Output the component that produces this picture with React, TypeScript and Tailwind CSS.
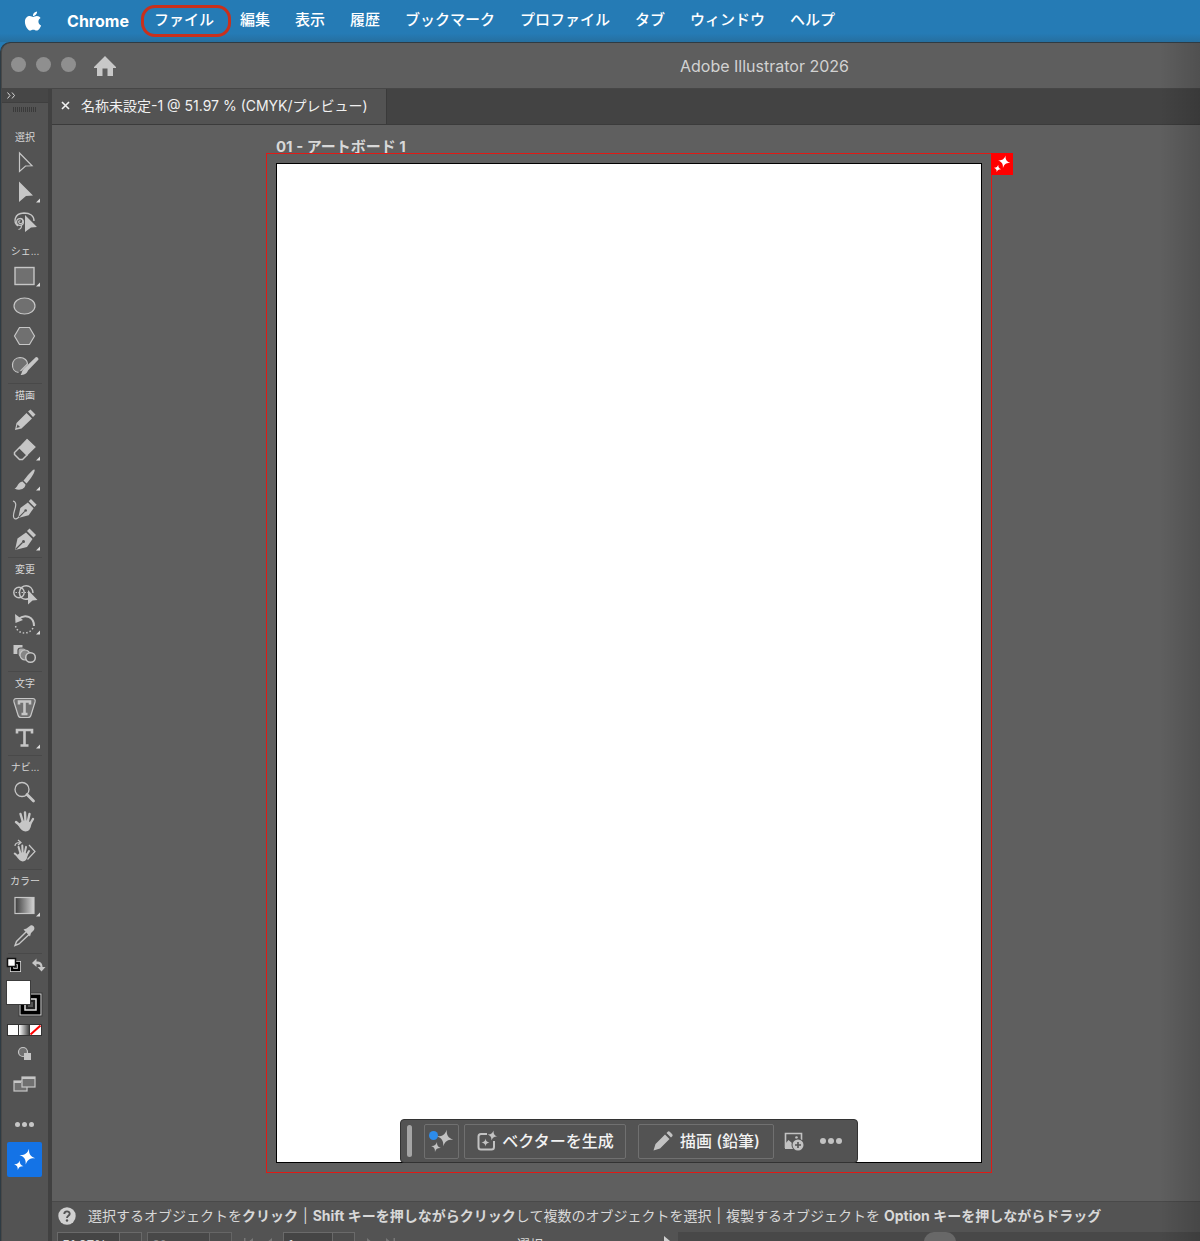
import type { ReactNode } from "react";
import { FaApple } from "react-icons/fa";

const menus = ["編集", "表示", "履歴", "ブックマーク", "プロファイル", "タブ", "ウィンドウ", "ヘルプ"];

const STAR = "M0 -10 C1 -3.5 3.5 -1 10 0 C3.5 1 1 3.5 0 10 C-1 3.5 -3.5 1 -10 0 C-3.5 -1 -1 -3.5 0 -10Z";

function Sparkles({ size }: { size: number }) {
  return (
    <svg width={size} height={size} viewBox="0 0 24 24" fill="currentColor" aria-hidden="true">
      <path d={STAR} transform="translate(15 9) rotate(12) scale(0.84)" />
      <path d={STAR} transform="translate(6 18) rotate(12) scale(0.5)" />
    </svg>
  );
}

function Tool({ label, more, children }: { label: string; more?: boolean; children: ReactNode }) {
  return (
    <button type="button" aria-label={label} className="flex h-[30px] w-full items-center justify-center">
      <svg width="34" height="30" viewBox="0 0 34 30" fill="none" stroke="#c6c6c6" strokeWidth="1.2" aria-hidden="true">
        {children}
        {more && <path d="M32 21.5V25.5H28Z" fill="#dcdcdc" stroke="none" />}
      </svg>
    </button>
  );
}

function Group({ title, first, children }: { title: string; first?: boolean; children: ReactNode }) {
  return (
    <section className="flex flex-col pb-0.5">
      <div className={first ? "mx-1.5 border-t border-transparent" : "mx-1.5 border-t border-[#494949]"} />
      <h2 className="flex h-[21px] items-end justify-center pb-px whitespace-nowrap text-[10px] leading-[18px] text-[#d6d6d6]">{title}</h2>
      {children}
    </section>
  );
}

const nib = (
  <>
    <path d="M7 25 L9.500 13.500 L18 7.500 L24.500 14 L19 22 Z" fill="#c6c6c6" stroke="none" />
    <path d="M19 6 L21.500 3.500 L28 10 L25.500 12.500 Z" fill="#c6c6c6" stroke="none" />
    <path d="M7.500 24.500 L14.500 17.500" stroke="#535353" />
    <circle cx="15.500" cy="16.500" r="1.500" fill="#535353" stroke="none" />
  </>
);

const hand = (
  <>
    <path d="M15.500 17 L12.500 7 M17.500 16 L17 5.500 M19.500 16 L21.500 7 M21.500 18 L25 12 M14 20 L8 15" strokeWidth="2.400" strokeLinecap="round" />
    <path d="M13.500 14.500 Q18 12.500 22 15 L23.500 16.500 Q22.500 24.500 17.500 24.500 Q13.500 24.500 10 18Z" fill="#c6c6c6" stroke="none" />
  </>
);

function Toolbar() {
  return (
    <aside aria-label="ツール" className="flex w-[46px] shrink-0 flex-col bg-[#535353]">
      <button type="button" aria-label="パネルを展開" className="flex h-[14px] items-center border-b border-[#3f3f3f] bg-[#464646] pl-[5px]">
        <svg width="9" height="7" viewBox="0 0 9 7" fill="none" stroke="#d8d8d8" aria-hidden="true">
          <path d="M0.500 0.500 L3 3.500 L0.500 6.500 M5 0.500 L7.500 3.500 L5 6.500" />
        </svg>
      </button>
      <div className="flex h-[22px] justify-center pt-1">
        <svg width="24" height="5" aria-hidden="true">
          <path d="M0 2.500 H24" stroke="#3a3a3a" strokeWidth="5" strokeDasharray="1 1" />
        </svg>
      </div>
      <Group title="選択" first>
        <Tool label="選択"><path d="M11.500 6 L24 18.800 L17.500 19 L11.500 24.500Z" /></Tool>
        <Tool label="ダイレクト選択" more><path d="M11 4.500 L25 18.500 L18 19 L11 25Z" fill="#c6c6c6" stroke="none" /></Tool>
        <Tool label="なげなわ">
          <path d="M10 19 C5 15 6 6.500 16 6 C22 6 26 9 26 14" strokeWidth="1.400" />
          <circle cx="12" cy="15" r="3.400" />
          <path d="M12.500 14 C10 13 10 17 13 16.500 C16 16 15 11 12 11.500 M13 18 C14 20 13 22 10.500 22.500" />
          <path d="M17 8 L29 20 L23 20.500 L17 25Z" fill="#c6c6c6" stroke="none" />
        </Tool>
      </Group>
      <Group title="シェ..." first>
        <Tool label="長方形" more><rect x="7" y="6.500" width="19" height="17" fill="#707070" strokeWidth="1.400" /></Tool>
        <Tool label="楕円形"><ellipse cx="16.500" cy="15" rx="10.500" ry="8" fill="#707070" /></Tool>
        <Tool label="多角形"><path d="M11.500 6.500 H21.500 L26.500 15 L21.500 23.500 H11.500 L6.500 15Z" fill="#707070" /></Tool>
        <Tool label="ブロブブラシ">
          <path d="M10.500 21.500 C2 20 2.500 7 12 6.500 C16.500 6.500 19.500 9.500 19.500 13 L12.500 20" fill="#707070" />
          <path d="M28 6 Q30.500 6 30.500 8.500 L20 19.500 C18.500 23 16 24 12.500 24 C14 22.500 13.500 20 16 17.500Z" fill="#c6c6c6" stroke="none" />
        </Tool>
      </Group>
      <Group title="描画">
        <Tool label="鉛筆">
          <path d="M7 25 L8.500 18 L18.500 8 L24 13.500 L13.500 23.500Z M20 6.500 L22.500 4.500 L27.500 9.500 L25 12Z" fill="#c6c6c6" stroke="none" />
          <path d="M9.500 19.500 L12 22 L8.500 23Z" fill="#535353" stroke="none" />
        </Tool>
        <Tool label="消しゴム" more>
          <path d="M19 4.500 L27 12 L19 20 L11.500 12.500Z" fill="#c6c6c6" />
          <path d="M11.500 12.500 L19 20 L14.500 24.500 H11.500 L6.500 19.500 V17.500Z" strokeWidth="1.500" />
        </Tool>
        <Tool label="ブラシ" more>
          <path d="M26.500 4.500 C28 6 22 15 18.500 18.500 L15.500 15.500 C18.500 12 25 3.500 26.500 4.500Z M14.500 16.500 L17.500 19.500 C17 24.500 11 26 6.500 23.500 C10 22.500 9.500 17 14.500 16.500Z" fill="#c6c6c6" stroke="none" />
        </Tool>
        <Tool label="曲線">
          <g transform="translate(4 1) scale(.88)">{nib}</g>
          <path d="M5 6 C12 8 3 19 6 23 C7.500 25 9 23.500 11 22" />
        </Tool>
        <Tool label="ペン" more>{nib}</Tool>
      </Group>
      <Group title="変更">
        <Tool label="シェイプ形成">
          <circle cx="11" cy="13.500" r="5.200" strokeWidth="1.400" />
          <path d="M21 19.500 C15 22 11 18 11.500 13 C12 5 24.500 4 25 14" strokeWidth="1.400" />
          <path d="M7.500 13.500 H22" strokeDasharray="1.500 1.500" />
          <path d="M20 11 L29.500 21 L24.500 21.500 L20 25.500Z" fill="#c6c6c6" stroke="none" />
        </Tool>
        <Tool label="回転" more>
          <path d="M10 10.500 C17 4 26 8 26 17" strokeWidth="2" />
          <path d="M7 5 L7.500 14 L15 11Z" fill="#c6c6c6" stroke="none" />
          <path d="M25 19 C21 26 10 26 7.500 17" strokeDasharray="1.500 2" strokeWidth="1.500" />
        </Tool>
        <Tool label="ブレンド">
          <rect x="5.500" y="6" width="9" height="9" fill="#c6c6c6" stroke="none" />
          <rect x="10" y="9" width="8" height="9" rx="2.500" fill="#a8a8a8" stroke="#535353" />
          <circle cx="17" cy="16" r="5" fill="#858585" stroke="#c6c6c6" />
          <circle cx="22.500" cy="18.500" r="4.800" fill="#535353" strokeWidth="1.500" />
        </Tool>
      </Group>
      <Group title="文字">
        <Tool label="文字タッチ">
          <path d="M8.500 5.500 H24.500 C27 5.500 27.500 7 27 9 L23 22 C22.500 24 21.500 24.500 20 24.500 H13 C11.500 24.500 10.500 24 10 22 L6 9 C5.500 7 6 5.500 8.500 5.500Z" fill="#707070" />
          <path d="M11 11.500 V8.500 H22 V11.500 M16.500 8.500 V21 M13.500 21 H19.500" strokeWidth="2.600" />
        </Tool>
        <Tool label="文字" more><path d="M9 10.500 V7 H24 V10.500 M16.500 7 V22.500 M12.500 22.500 H20.500" strokeWidth="2.600" /></Tool>
      </Group>
      <Group title="ナビ...">
        <Tool label="ズーム">
          <circle cx="14" cy="12.500" r="7" strokeWidth="1.300" />
          <path d="M19 17.500 L25.500 24" strokeWidth="2.800" strokeLinecap="round" />
        </Tool>
        <Tool label="手のひら">{hand}</Tool>
        <Tool label="ビュー回転">
          <g transform="translate(0 4) scale(.84)">{hand}</g>
          <path d="M7 9 C7 6 9 5.500 12 5.500 M10 3 L13 5.500 L10 8 M21 8 L27 14.500 L19.500 22.500" />
        </Tool>
      </Group>
      <Group title="カラー">
        <Tool label="グラデーション" more>
          <defs>
            <linearGradient id="grad"><stop stopColor="#3b3b3b" /><stop offset="1" stopColor="#d5d5d5" /></linearGradient>
          </defs>
          <rect x="7" y="6.500" width="19" height="16" fill="url(#grad)" />
        </Tool>
        <Tool label="スポイト">
          <path d="M18 11 L8.500 20.500 L7 24.500 L11 23 L21 13.500" strokeWidth="1.400" />
          <path d="M15.500 8.500 L18.500 7.500 L22.500 4.500 C24.500 3.500 27.500 6 26 9 L23 12 L22 15.500 Z" fill="#c6c6c6" stroke="none" />
        </Tool>
      </Group>
      <div className="mx-1.5 border-t border-[#494949]" />
      <div className="flex items-center justify-between pt-[3px] pr-0.5 pl-1">
        <button type="button" aria-label="初期設定の塗りと線">
          <svg width="16" height="16" viewBox="0 0 16 16" aria-hidden="true">
            <rect x="6" y="6" width="7" height="7" fill="none" stroke="#dedede" strokeWidth="4" />
            <rect x="6" y="6" width="7" height="7" fill="none" stroke="#000" strokeWidth="2.400" />
            <rect x="1.500" y="1.500" width="8" height="8" fill="#fff" stroke="#111" strokeWidth="1.500" />
          </svg>
        </button>
        <button type="button" aria-label="塗りと線を入れ替え">
          <svg width="15" height="16" viewBox="0 0 15 16" fill="#c6c6c6" aria-hidden="true">
            <path d="M1 6 L5.500 1.500 V4.500 C10 4.500 11.500 6.500 11.500 10 H14.500 L10.500 14.500 L6.500 10 H9.500 C9.500 8 8.500 7 5.500 7 V10Z" />
          </svg>
        </button>
      </div>
      <button type="button" aria-label="塗りと線" className="flex justify-start pt-[7px] pl-1">
        <svg width="37" height="37" viewBox="0 0 37 37" aria-hidden="true">
          <rect x="13" y="13" width="23" height="23" fill="#000" stroke="#3c3c3c" />
          <rect x="14" y="14" width="21" height="21" fill="#000" stroke="#e0e0e0" />
          <rect x="19" y="19" width="11" height="11" fill="#222" stroke="#e0e0e0" strokeWidth="1.500" />
          <rect x="22" y="22" width="5" height="5" fill="#535353" />
          <rect x="0.500" y="0.500" width="24" height="24" fill="#fff" stroke="#3c3c3c" />
        </svg>
      </button>
      <button type="button" aria-label="カラーモード" className="flex justify-start pt-[7px] pl-[5px]">
        <svg width="35" height="12" viewBox="0 0 35 12" aria-hidden="true">
          <defs>
            <linearGradient id="mode"><stop stopColor="#fff" /><stop offset="1" stopColor="#444" /></linearGradient>
          </defs>
          <rect width="35" height="12" fill="#333" />
          <rect x="1" y="1" width="10" height="10" fill="#fff" />
          <rect x="12" y="1" width="10" height="10" fill="url(#mode)" />
          <rect x="23" y="1" width="11" height="10" fill="#fff" />
          <path d="M23.500 10.500 L33.500 1.500" stroke="#f00" strokeWidth="2" />
        </svg>
      </button>
      <div className="pt-[3px]">
        <Tool label="描画方法">
          <circle cx="15" cy="13" r="4.500" fill="#707070" />
          <rect x="16" y="14" width="7" height="7" fill="#c6c6c6" stroke="none" />
        </Tool>
        <Tool label="スクリーンモード">
          <rect x="6" y="12" width="13" height="10" fill="#707070" />
          <rect x="14" y="8" width="13" height="10" fill="#707070" />
          <path d="M14 9 H27 M6 13 H13" strokeWidth="2" />
        </Tool>
      </div>
      <button type="button" aria-label="ツールバーを編集" className="flex h-[43px] items-center justify-center gap-0.5 pt-2 pr-0.5">
        <i className="size-[5px] rounded-full bg-[#c6c6c6]" />
        <i className="size-[5px] rounded-full bg-[#c6c6c6]" />
        <i className="size-[5px] rounded-full bg-[#c6c6c6]" />
      </button>
      <button type="button" aria-label="生成 AI" className="ml-[5px] flex size-[35px] items-center justify-center rounded-xs bg-[#1473e6] text-white">
        <Sparkles size={23} />
      </button>
    </aside>
  );
}

function ContextBar() {
  return (
    <div role="toolbar" aria-label="コンテキストタスクバー" className="absolute -bottom-px left-1/2 flex h-[44px] w-[458px] -translate-x-1/2 items-center rounded border border-[#333] bg-[#535353] pl-1.5 text-[16px] font-medium text-[#f2f2f2]">
      <div className="h-8 w-[5px] rounded-sm bg-[#a5a5a5]" />
      <button type="button" aria-label="生成 AI" className="relative ml-3 flex size-[35px] items-center justify-center rounded-xs border border-[#707070] text-[#c2c2c2]">
        <Sparkles size={24} />
        <i className="absolute top-1.5 left-1 size-[9px] rounded-full bg-[#2d8ceb]" />
      </button>
      <button type="button" className="ml-[5px] flex h-[35px] w-[162px] items-center justify-center gap-1 whitespace-nowrap rounded-xs border border-[#707070]">
        <svg width="22" height="22" viewBox="0 0 22 22" fill="none" stroke="#c2c2c2" strokeWidth="2" aria-hidden="true">
          <path d="M11 4 H5 Q2.500 4 2.500 6.500 V17 Q2.500 19.500 5 19.500 H15.500 Q18 19.500 18 17 V11" />
          <path d={STAR} transform="translate(16.5 5.500) rotate(12) scale(.52)" fill="#c2c2c2" stroke="none" />
          <path d={STAR} transform="translate(9.500 12.500) scale(.4)" fill="#c2c2c2" stroke="none" />
        </svg>
        ベクターを生成
      </button>
      <button type="button" className="ml-3 flex h-[35px] w-[136px] items-center justify-center gap-1.5 whitespace-nowrap rounded-xs border border-[#707070]">
        <svg width="22" height="22" viewBox="0 0 22 22" fill="#c2c2c2" aria-hidden="true">
          <path d="M1.500 20.500 L3.500 14 L13 4.500 L17.500 9 L8 18.500Z M14.500 3 L16 1.500 Q17 1 18 2 L20 4 Q21 5 20.500 6 L19 7.500Z" />
        </svg>
        描画 (鉛筆)
      </button>
      <button type="button" aria-label="画像を追加" className="ml-2.5">
        <svg width="21" height="21" viewBox="0 0 21 21" aria-hidden="true">
          <path d="M1.500 17 V2.500 H17.500 V9" fill="none" stroke="#c2c2c2" strokeWidth="1.600" />
          <path d="M1 18 V13 L4.500 9 L8 12 L10 11 V18Z" fill="#c2c2c2" />
          <circle cx="12.500" cy="6.500" r="1.300" fill="#c2c2c2" />
          <circle cx="14" cy="14" r="6.500" fill="#535353" />
          <circle cx="14" cy="14" r="5.500" fill="#c2c2c2" />
          <path d="M14 11 V17 M11 14 H17" stroke="#535353" strokeWidth="1.600" />
        </svg>
      </button>
      <button type="button" aria-label="その他" className="ml-[15px] flex gap-0.5">
        <i className="size-[6px] rounded-full bg-[#c2c2c2]" />
        <i className="size-[6px] rounded-full bg-[#c2c2c2]" />
        <i className="size-[6px] rounded-full bg-[#c2c2c2]" />
      </button>
    </div>
  );
}

export default function App() {
  return (
    <div className="flex min-h-screen flex-col overflow-hidden bg-[#257bb5] font-['Inter','Noto_Sans_CJK_JP',sans-serif]">
      <nav aria-label="メニューバー" className="flex h-[42px] items-center bg-linear-to-b from-[#257bb5] from-80% to-[#266f9f] pb-px text-[15px] font-medium whitespace-nowrap text-white">
        <button type="button" aria-label="Apple" className="ml-[22px]"><FaApple size={22} /></button>
        <button type="button" className="ml-[22px] w-[64px] text-[16px] font-bold">Chrome</button>
        <button type="button" className="ml-[11px] h-8 w-[90px] rounded-[14px] border-[3px] border-[#c9301c] pr-1">ファイル</button>
        <div className="ml-[9px] flex gap-[25px]">
          {menus.map((m) => <button type="button" key={m}>{m}</button>)}
        </div>
      </nav>

      <div className="relative flex flex-1 flex-col overflow-hidden rounded-tl-[10px] border-t border-l border-[#2e3b43] bg-[#5e5e5e] shadow-[inset_1px_0_0_#484848]">
        <header className="grid h-[46px] grid-cols-[1fr_auto_351px] items-center border-b border-[#464646]">
          <div className="flex items-center pb-0.5 pl-2.5">
            <div className="flex gap-[10px]">
              <button type="button" aria-label="閉じる" className="size-[15px] rounded-full bg-[#8f8f8f]" />
              <button type="button" aria-label="しまう" className="size-[15px] rounded-full bg-[#8f8f8f]" />
              <button type="button" aria-label="拡大" className="size-[15px] rounded-full bg-[#8f8f8f]" />
            </div>
            <button type="button" aria-label="ホーム" className="ml-[18px] pt-0.5">
              <svg width="22" height="20" viewBox="0 0 22 20" fill="#c8c8c8" aria-hidden="true">
                <path d="M11 0 L22 11 V12 H19 V20 H13.500 V12.500 H8.500 V20 H3 V12 H0 V11Z" />
              </svg>
            </button>
          </div>
          <h1 className="text-[16px] text-[#d2d2d2]">Adobe Illustrator 2026</h1>
        </header>

        <div className="flex flex-1 pl-px">
          <Toolbar />
          <div className="flex min-w-0 flex-1 flex-col border-l-4 border-[#414141]">
            <div className="flex h-[36px] border-b border-[#3b3b3b] bg-[#434343]">
              <div className="flex w-[335px] items-center border-r border-[#3a3a3a] bg-[#535353] pb-0.5 pl-[9px] text-[#f0f0f0]">
                <button type="button" aria-label="タブを閉じる">
                  <svg width="9" height="9" viewBox="0 0 9 9" stroke="currentColor" strokeWidth="1.600" aria-hidden="true"><path d="M1 1 L8 8 M8 1 L1 8" /></svg>
                </button>
                <button type="button" className="ml-[11px] text-[14px] whitespace-nowrap">名称未設定-1 @ 51.97 % (CMYK/プレビュー)</button>
              </div>
            </div>

            <main className="flex-1 bg-[#5f5f5f] pt-3 pr-[208px] pb-[28px] pl-[214px]">
              <h2 className="ml-2.5 h-4 text-[15px] leading-[19px] font-bold text-[#d8d8d8]">01 - アートボード 1</h2>
              <div className="relative border border-[#e01a16] p-[9px]">
                <div className="relative aspect-[706/1000] w-full border border-black bg-white">
                  <ContextBar />
                </div>
                <button type="button" aria-label="生成" className="absolute -top-px left-full flex size-[22px] items-center justify-center bg-[#f00] text-white">
                  <Sparkles size={18} />
                </button>
              </div>
            </main>

            <footer className="border-t border-[#494949] bg-[#535353] text-[#d8d8d8]">
              <div className="flex h-[30px] items-center pb-[3px] pl-[6px] text-[14px] whitespace-nowrap">
                <svg width="18" height="18" viewBox="0 0 18 18" aria-hidden="true">
                  <circle cx="9" cy="9" r="8.700" fill="#d0d0d0" />
                  <path d="M6.300 7 C6.300 3.500 11.700 3.500 11.700 6.800 C11.700 8.800 9 8.800 9 11" fill="none" stroke="#535353" strokeWidth="1.900" />
                  <circle cx="9" cy="13.500" r="1.200" fill="#535353" />
                </svg>
                <p className="ml-3">選択するオブジェクトを<b>クリック</b></p>
                <span className="mx-[5px]">|</span>
                <p><b>Shift キーを押しながらクリック</b>して複数のオブジェクトを選択</p>
                <span className="mx-[5px]">|</span>
                <p>複製するオブジェクトを <b>Option キーを押しながらドラッグ</b></p>
              </div>
              <div className="flex h-[9px] items-start overflow-hidden pl-[5px] text-[13px] leading-[20px]">
                <input aria-label="ズーム" defaultValue="51.97%" className="h-6 w-[63px] border border-[#6a6a6a] bg-[#454545] pt-0.5 pl-1" />
                <button type="button" aria-label="ズームを選択" className="h-6 w-[22px] border border-l-0 border-[#6a6a6a] bg-[#4d4d4d]" />
                <input aria-label="回転" defaultValue="0°" className="ml-[5px] h-6 w-[63px] border border-[#666] bg-[#484848] pt-0.5 pl-1 text-[#888]" />
                <button type="button" aria-label="回転を選択" className="h-6 w-[22px] border border-l-0 border-[#666] bg-[#4d4d4d]" />
                <svg className="mt-1.5 ml-3" width="28" height="10" viewBox="0 0 28 10" fill="#777" aria-hidden="true"><path d="M0 0 H1.500 V10 H0Z M9 0 V10 L3 5Z M28 0 V10 L22 5Z" /></svg>
                <input aria-label="アートボード" defaultValue="1" className="ml-[11px] h-6 w-[50px] border border-[#6a6a6a] bg-[#454545] pt-0.5 pl-1" />
                <button type="button" aria-label="アートボードを選択" className="h-6 w-[22px] border border-l-0 border-[#6a6a6a] bg-[#4d4d4d]" />
                <svg className="mt-1.5 ml-3" width="28" height="10" viewBox="0 0 28 10" fill="#777" aria-hidden="true"><path d="M0 0 L6 5 L0 10Z M19 0 L25 5 L19 10Z M26.500 0 H28 V10 H26.500Z" /></svg>
                <span className="ml-[122px] pt-0.5 text-[13px]">選択</span>
                <svg className="mt-1 ml-[121px]" width="6" height="10" viewBox="0 0 6 10" fill="#d0d0d0" aria-hidden="true"><path d="M0 0 L6 5 L0 10Z" /></svg>
                <div className="ml-2 h-6 flex-1 bg-[#484848] pl-[246px]"><div className="h-5 w-8 rounded-[10px] bg-[#686868]" /></div>
              </div>
            </footer>
          </div>
        </div>
        <div className="pointer-events-none absolute inset-y-0 right-0 w-10 bg-linear-to-r from-transparent to-black/15" />
      </div>
    </div>
  );
}
